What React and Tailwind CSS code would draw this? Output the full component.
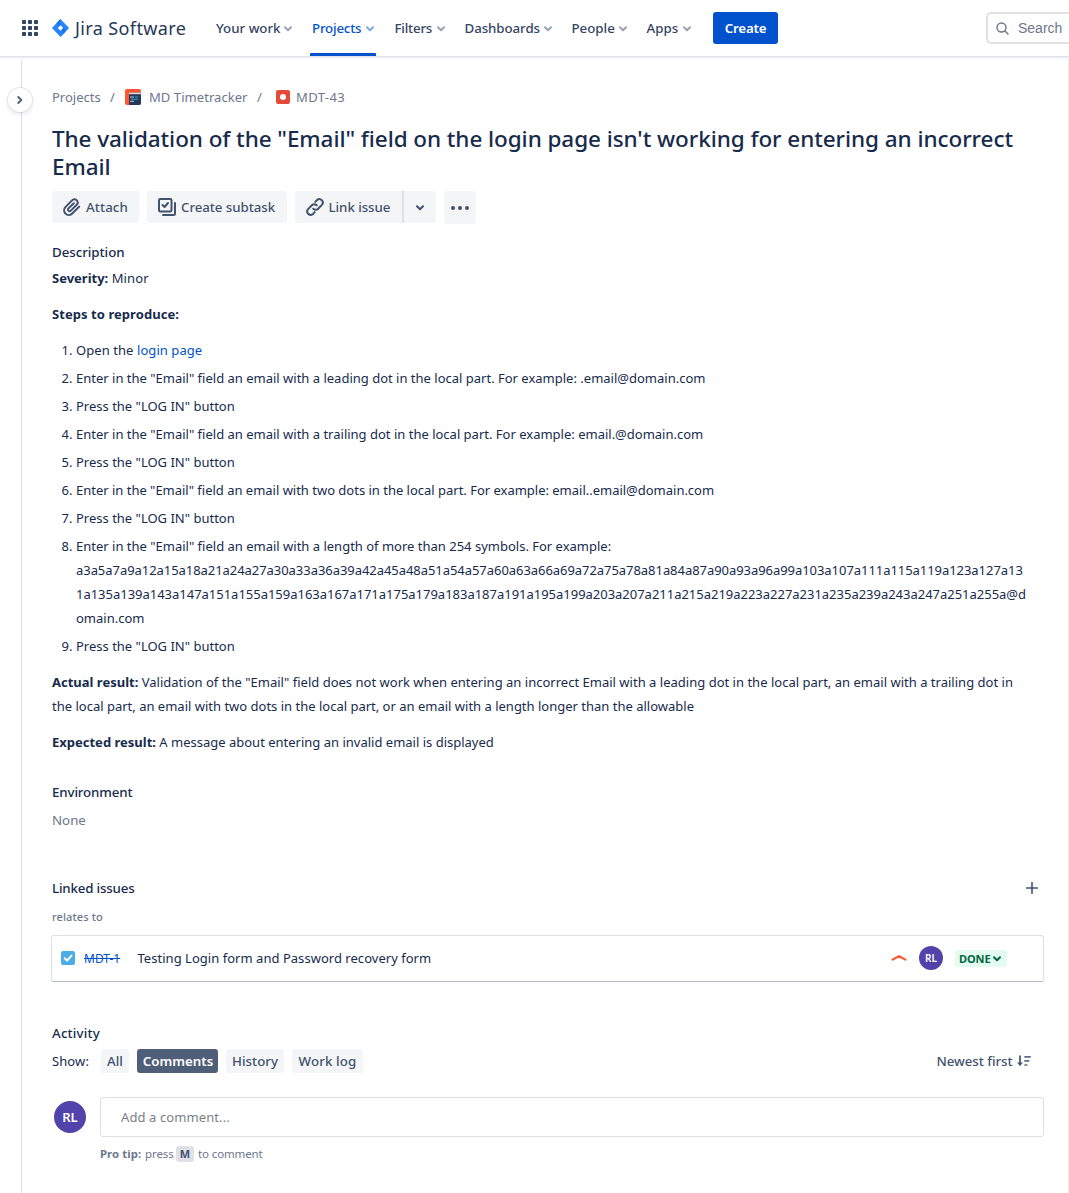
import React from "react";

function Chevron({ className = "", size = 8, sw = 2 }) {
  return (
    <svg className={className} width={size} height={size * 0.75} viewBox="0 0 8 6" fill="none" stroke="currentColor" strokeWidth={sw} strokeLinecap="round" strokeLinejoin="round">
      <path d="M1 1.3 4 4.3 7 1.3" />
    </svg>
  );
}

function NavItem({ label, className = "", active = false }) {
  return (
    <div className={`relative flex h-full shrink-0 items-center justify-between whitespace-nowrap ${active ? "text-[#0052cc]" : "text-[#344563]"} ${className}`}>
      <span className="pt-0.5">{label}</span>
      <Chevron className={`mt-px ${active ? "text-[#7ea6e6]" : "text-[#9aa3b3]"}`} />
      {active && <span className="absolute -left-0.5 -right-0.5 bottom-0 h-[3px] rounded-t-[1px] bg-[#0052cc]" />}
    </div>
  );
}

function Header() {
  return (
    <header className="relative z-10 flex h-14 shrink-0 items-center border-b-0 bg-white pl-[22px] text-[13.3px] font-medium shadow-[0_1px_0_#dfe1e8,0_2px_1px_#f0f0f6,0_3px_1px_#f8f8fb]">
      <svg width="16" height="16" viewBox="0 0 16 16" fill="#344563" className="shrink-0">
        {[0, 6, 12].map((y) => [0, 6, 12].map((x) => <rect key={`${x}-${y}`} x={x} y={y} width="4" height="4" rx="0.8" />))}
      </svg>
      <div className="ml-[13px] flex w-[136px] shrink-0 items-center">
        <svg width="18" height="18" viewBox="0 0 18 18" className="shrink-0">
          <defs>
            <linearGradient id="markA" x1="0.9" y1="0.1" x2="0.3" y2="0.6">
              <stop offset="0" stopColor="#0052cc" />
              <stop offset="1" stopColor="#2684ff" />
            </linearGradient>
          </defs>
          <path d="M9.500 .1 18 9 9.500 17.900 1 9Z" fill="#2684ff" />
          <path d="M9.500 .1Q7.500 3.200 9.500 6L6.700 9Q4.100 7.600 5.100 4.600Z" fill="url(#markA)" />
          <path d="M9.500 17.900Q11.500 14.800 9.500 12L12.300 9Q14.900 10.400 13.900 13.400Z" fill="url(#markA)" opacity=".7" />
          <path d="M9.500 6.300 12.200 9 9.500 11.700 6.800 9Z" fill="#fff" />
        </svg>
        <span className="ml-1.5 whitespace-nowrap text-[18px] font-normal leading-6 tracking-[0.38px] text-[#253858]">Jira Software</span>
      </div>
      <nav className="ml-[29px] flex h-full items-center gap-5">
        <NavItem label="Your work" className="w-[76px]" />
        <NavItem label="Projects" className="w-[62px] tracking-[-0.2px]" active />
        <NavItem label="Filters" className="w-[51px] pl-[0.5px] tracking-[-0.2px]" />
        <NavItem label="Dashboards" className="ml-[-1px] w-[88px] pl-[0.5px] tracking-[-0.07px]" />
        <NavItem label="People" className="ml-[-1px] w-[56px] pl-[0.5px]" />
        <NavItem label="Apps" className="ml-[-1px] w-[45px] pl-[0.5px]" />
      </nav>
      <button className="ml-[22px] h-8 w-[65px] shrink-0 rounded-[3px] bg-[#0052cc] pt-0.5 font-semibold tracking-[-0.2px] text-white">Create</button>
      <div className="ml-auto flex h-8 w-[83px] shrink-0 items-center rounded-l-[5px] border-2 border-r-0 border-[#dfe1e6] pl-2">
        <svg width="13" height="13" viewBox="0 0 13 13" fill="none" stroke="#6b778c" strokeWidth="1.4" strokeLinecap="round">
          <circle cx="5.500" cy="5.500" r="4.500" />
          <path d="m9 9 3 3" />
        </svg>
        <span className="ml-[9px] font-['Liberation_Sans',sans-serif] text-[14px] font-normal text-[#6b778c]">Search</span>
      </div>
    </header>
  );
}

function Breadcrumbs() {
  return (
    <div className="flex h-6 items-center whitespace-nowrap text-[13px] text-[#6b778c]">
      <span className="w-[49px] pt-0.5">Projects</span>
      <span className="ml-[9px] w-[15px] pt-0.5">/</span>
      <svg width="16" height="16" viewBox="0 0 16 16">
        <rect width="16" height="16" rx="2" fill="#ff5630" />
        <path d="M4 3.500h12V14a2 2 0 0 1-2 2H4Z" fill="#253858" />
        <path d="M4 3.500h12v1.700H4Z" fill="#f2d5cf" />
        <path d="M5 8h4M5 12.300h4" stroke="#c1c7d0" strokeWidth="1" />
        <path d="M10 8h3M6 10.200h7" stroke="#2aa5c4" strokeWidth="1" />
      </svg>
      <span className="ml-2 w-[99px] pt-0.5 tracking-[0.06px]">MD Timetracker</span>
      <span className="ml-[9px] w-[19px] pt-0.5">/</span>
      <svg width="14" height="14" viewBox="0 0 14 14">
        <rect width="14" height="14" rx="2" fill="#e5493a" />
        <circle cx="7" cy="7" r="3" fill="#fff" />
      </svg>
      <span className="pl-1.5 pt-0.5 tracking-[0.4px]">MDT-43</span>
    </div>
  );
}

function Toolbar() {
  return (
    <div className="mt-2.5 flex items-start gap-2 whitespace-nowrap text-[13.3px] font-medium text-[#42526e]">
      <button className="flex h-8 w-[87px] items-center rounded-[3px] bg-[#f4f5f7] pl-[11px] tracking-[0.08px]">
        <svg width="18" height="18" viewBox="0 0 18 18" fill="none" stroke="currentColor" strokeWidth="2" strokeLinecap="round" strokeLinejoin="round">
          <path d="M16.200 8.600 9.300 15.500a4.600 4.600 0 0 1-6.900-6.400L8.800 2.600a3.300 3.300 0 0 1 5.300.2 3.100 3.100 0 0 1-.4 4L7.900 12.600a1.600 1.600 0 0 1-2.400-2.200L10.800 5.200" />
        </svg>
        <span className="ml-[5px] pt-0.5">Attach</span>
      </button>
      <button className="flex h-8 w-[140px] items-center rounded-[3px] bg-[#f4f5f7] pl-[11px] tracking-[-0.06px]">
        <svg width="18" height="18" viewBox="0 0 18 18" fill="none" stroke="currentColor" strokeWidth="2" strokeLinecap="round" strokeLinejoin="round">
          <rect x="1" y="1" width="12.500" height="12.500" rx="1.200" />
          <path d="m4.500 7 2 2L10 5M17 5v10.500A1.500 1.500 0 0 1 15.500 17H5" />
        </svg>
        <span className="ml-[5px] pt-0.5">Create subtask</span>
      </button>
      <div className="flex h-8">
        <button className="flex h-8 w-[107px] items-center rounded-l-[3px] bg-[#f4f5f7] pl-[11px]">
          <svg width="18" height="18" viewBox="0 0 18 18" fill="none" stroke="currentColor" strokeWidth="2" strokeLinecap="round">
            <path d="M7.300 10.700a3.400 3.400 0 0 0 4.800 0l3.800-3.800a3.400 3.400 0 0 0-4.800-4.800L9.300 3.900" />
            <path d="M10.700 7.300a3.400 3.400 0 0 0-4.800 0L2.100 11.100a3.400 3.400 0 0 0 4.800 4.800l1.800-1.800" />
          </svg>
          <span className="ml-[4.500px] pt-0.5 tracking-[-0.05px]">Link issue</span>
        </button>
        <button className="flex h-8 w-[34px] items-center justify-center rounded-r-[3px] border-l-2 border-[#dfe1e6] bg-[#f4f5f7]">
          <Chevron className="mt-px" />
        </button>
      </div>
      <button className="flex h-[33px] w-8 items-center justify-center rounded-[3px] bg-[#f4f5f7]">
        <svg width="18" height="4" viewBox="0 0 18 4" fill="currentColor">
          <circle cx="2" cy="2" r="2" />
          <circle cx="9" cy="2" r="2" />
          <circle cx="16" cy="2" r="2" />
        </svg>
      </button>
    </div>
  );
}

const press = 'Press the "LOG IN" button';

const steps = [
  <span className="tracking-[0.07px]">Open the <a className="text-[#0052cc]">login page</a></span>,
  'Enter in the "Email" field an email with a leading dot in the local part. For example: .email@domain.com',
  press,
  'Enter in the "Email" field an email with a trailing dot in the local part. For example: email.@domain.com',
  press,
  <span className="tracking-[-0.012px]">Enter in the "Email" field an email with two dots in the local part. For example: email..email@domain.com</span>,
  press,
  <>
    Enter in the "Email" field an email with a length of more than 254 symbols. For example:
    <span className="block tracking-[-0.05px]">a3a5a7a9a12a15a18a21a24a27a30a33a36a39a42a45a48a51a54a57a60a63a66a69a72a75a78a81a84a87a90a93a96a99a103a107a111a115a119a123a127a13</span>
    <span className="block tracking-[-0.016px]">1a135a139a143a147a151a155a159a163a167a171a175a179a183a187a191a195a199a203a207a211a215a219a223a227a231a235a239a243a247a251a255a@d</span>
    <span className="block">omain.com</span>
  </>,
  press,
];

function Label({ children, className = "" }) {
  return <h2 className={`h-6 text-[13.3px] font-medium leading-6 ${className}`}>{children}</h2>;
}

function Description() {
  return (
    <section className="mt-4 whitespace-nowrap text-[13px] leading-6">
      <Label className="mb-0.5 tracking-[-0.04px]">Description</Label>
      <p><b>Severity:</b> <span className="tracking-[0.12px]">Minor</span></p>
      <p className="mt-3"><b className="tracking-[0.06px]">Steps to reproduce:</b></p>
      <ol className="mt-3 flex flex-col gap-1">
        {steps.map((s, i) => (
          <li key={i} className="flex">
            <span className="w-6 pr-[3.500px] text-right">{i + 1}.</span>
            <div>{s}</div>
          </li>
        ))}
      </ol>
      <p className="mt-3">
        <b>Actual result:</b> <span className="tracking-[0.012px]">Validation of the "Email" field does not work when entering an incorrect Email with a leading dot in the local part, an email with a trailing dot in</span>
        <br />
        the local part, an email with two dots in the local part, or an email with a length longer than the allowable
      </p>
      <p className="mt-3"><b>Expected result:</b> A message about entering an invalid email is displayed</p>
    </section>
  );
}

function Avatar({ className = "" }) {
  return <div className={`flex shrink-0 items-center justify-center rounded-full bg-[#5243aa] font-semibold text-white ${className}`}>RL</div>;
}

function LinkedIssues() {
  return (
    <section className="mt-11">
      <div className="flex items-center justify-between pr-1.5">
        <Label className="tracking-[-0.17px]">Linked issues</Label>
        <svg width="12" height="12" viewBox="0 0 12 12" stroke="#42526e" strokeWidth="1.600" strokeLinecap="round">
          <path d="M6 .7v10.600M.7 6h10.600" />
        </svg>
      </div>
      <h3 className="mt-2 h-[18px] text-[11px] font-medium leading-[18px] tracking-[0.13px] text-[#6b778c]">relates to</h3>
      <div className="-ml-px mt-[9px] flex h-[47px] items-center rounded-[3px] border border-[#dfe1e6] border-b-[#b3b9c7] bg-white pb-px pl-[9px] text-[13px]">
        <svg width="14" height="14" viewBox="0 0 14 14">
          <rect width="14" height="14" rx="2" fill="#4bade8" />
          <path d="m3.700 7.300 2.300 2.300L10.500 4.600" fill="none" stroke="#fff" strokeWidth="2" strokeLinecap="round" strokeLinejoin="round" />
        </svg>
        <a className="ml-[9px] w-[53.500px] pt-px text-[12px] text-[#0052cc] line-through">MDT-1</a>
        <span className="pt-px tracking-[0.03px]">Testing Login form and Password recovery form</span>
        <svg className="ml-auto" width="16" height="8" viewBox="0 0 16 8" fill="none" stroke="#ff5630" strokeWidth="2.200" strokeLinecap="round" strokeLinejoin="round">
          <path d="M1.500 5.600 8 2.200l6.500 3.400" />
        </svg>
        <Avatar className="ml-3 h-6 w-6 text-[10px]" />
        <div className="ml-3 mr-9 mt-px flex h-[17px] w-[52px] items-center gap-0.5 rounded-[3px] bg-[#e3fcef] pl-1 pt-px text-[11px] font-bold tracking-[-0.09px] text-[#006644]">
          DONE
          <Chevron />
        </div>
      </div>
    </section>
  );
}

function Activity() {
  const tab = "flex h-6 items-center justify-center rounded-[3px] pt-0.5";
  const idle = "bg-[#f4f5f7] text-[#42526e]";
  return (
    <section className="mt-[39px]">
      <Label className="tracking-[0.17px]">Activity</Label>
      <div className="mt-1 flex h-6 items-center gap-2 whitespace-nowrap text-[13.3px] font-medium">
        <span className="w-[41px] pt-0.5 text-[13px] font-normal tracking-[0.1px]">Show:</span>
        <div className={`${tab} ${idle} w-7`}>All</div>
        <div className={`${tab} w-[81px] bg-[#505f79] pl-px font-semibold text-white`}>Comments</div>
        <div className={`${tab} ${idle} w-[58px]`}>History</div>
        <div className={`${tab} ${idle} w-[71px] tracking-[0.14px]`}>Work log</div>
        <div className="ml-auto mr-[13.500px] flex items-center gap-1 tracking-[-0.04px] text-[#42526e]">
          <span className="pt-0.5">Newest first</span>
          <svg width="14" height="12" viewBox="0 0 14 12" fill="none" stroke="currentColor" strokeWidth="1.700" strokeLinecap="round">
            <path d="M3 1v8.500" />
            <path d="M.8 8 3 10.600 5.200 8Z" fill="currentColor" strokeWidth=".6" strokeLinejoin="round" />
            <path d="M8 1.800h5.200M8 5.900h3.600M8 10h1.800" opacity=".85" />
          </svg>
        </div>
      </div>
      <div className="mt-6 flex items-center">
        <Avatar className="ml-0.5 h-8 w-8 pt-0.5 text-[13px]" />
        <div className="ml-[14px] flex h-10 flex-1 items-center rounded-[3px] border border-[#dfe1e6] pl-5 pt-0.5 text-[13px] tracking-[0.1px] text-[#7a7f87]">Add a comment...</div>
      </div>
      <div className="ml-12 mt-[9px] flex h-4 items-center whitespace-nowrap text-[11.500px] text-[#6b778c]">
        <b className="w-[45px] text-[11.300px] tracking-[0.1px]">Pro tip:</b>
        <span className="w-[31px] tracking-[-0.1px]">press</span>
        <span className="flex h-4 w-[18px] items-center justify-center rounded-[3px] bg-[#dfe1e6] text-[11px] font-bold text-[#42526e]">M</span>
        <span className="ml-1 tracking-[-0.12px]">to comment</span>
      </div>
    </section>
  );
}

export default function App() {
  return (
    <div className="flex h-[1193px] w-[1069px] flex-col overflow-hidden bg-white font-['Noto_Sans','Open_Sans',sans-serif] text-[#172b4d]">
      <Header />
      <div className="flex flex-1">
        <aside className="relative w-[22px] shrink-0 border-r border-[#dfe1e6]">
          <button className="absolute left-2 top-8 flex h-6 w-6 items-center justify-center rounded-full bg-white text-[#5a6680] shadow-[0_0_0_1px_rgba(9,30,66,0.08),0_2px_4px_1px_rgba(9,30,66,0.08)]">
            <Chevron className="-rotate-90" />
          </button>
        </aside>
        <main className="flex-1 border-r border-[#ebecf0] pl-[30px] pr-6 pt-[29px]">
          <Breadcrumbs />
          <h1 className="mt-4 whitespace-nowrap text-[22.500px] font-medium leading-7 tracking-[-0.065px]">
            The validation of the "Email" field on the login page isn't working for entering an incorrect
            <br />
            Email
          </h1>
          <Toolbar />
          <Description />
          <section className="mt-[26px]">
            <Label className="tracking-[-0.12px]">Environment</Label>
            <p className="mt-1 text-[13.3px] leading-6 text-[#6b778c]">None</p>
          </section>
          <LinkedIssues />
          <Activity />
        </main>
      </div>
    </div>
  );
}
